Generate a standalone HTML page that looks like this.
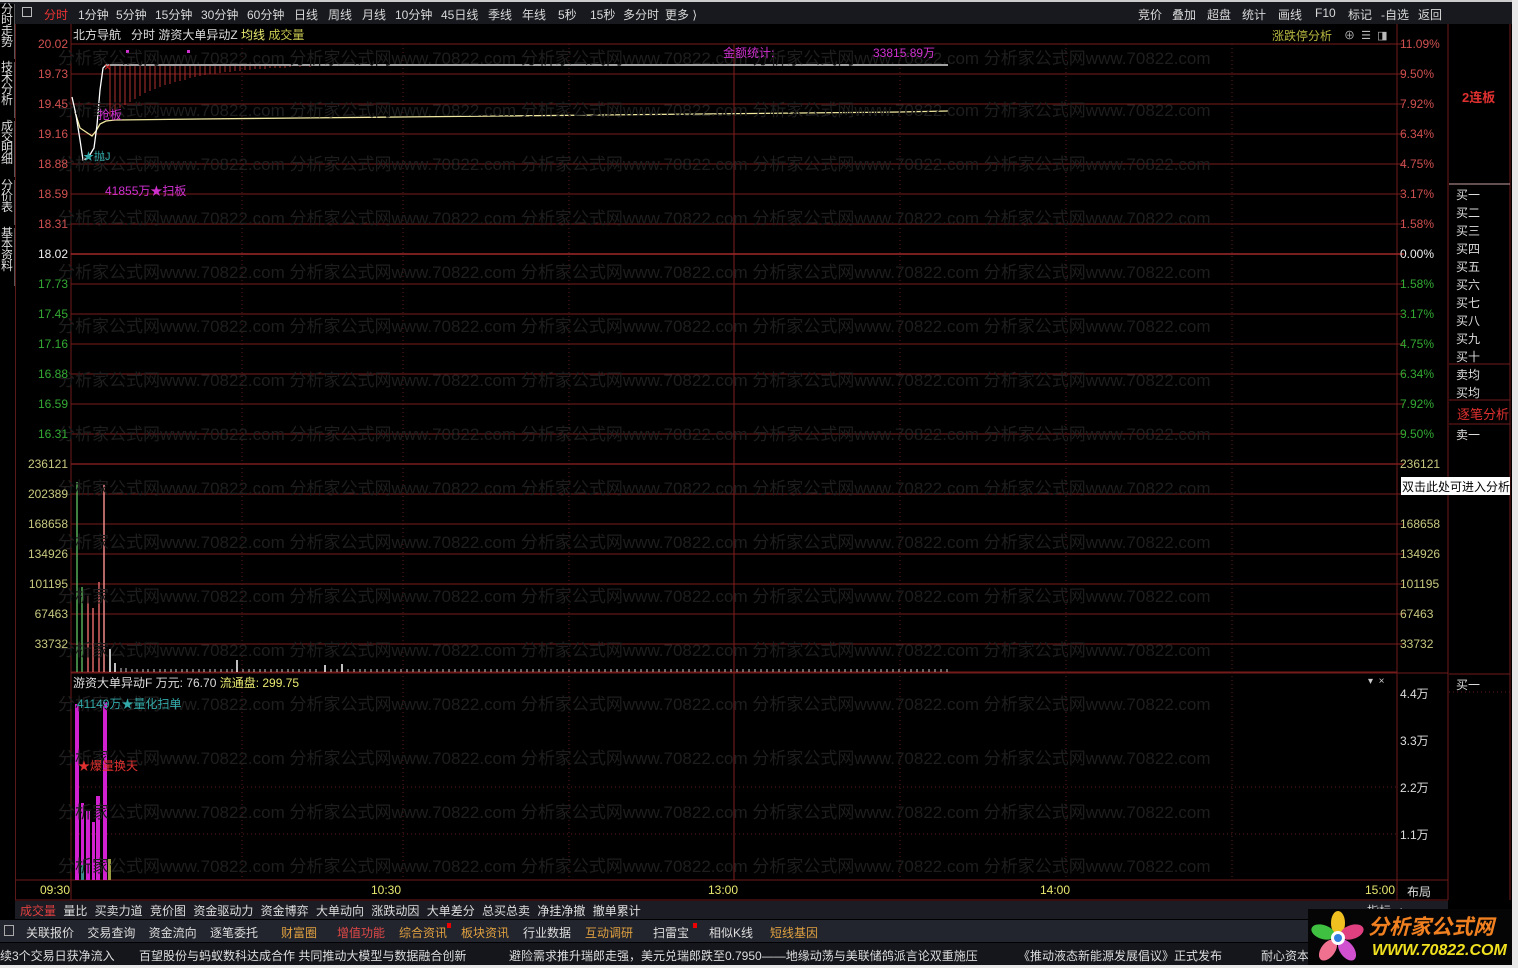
<!DOCTYPE html>
<html><head><meta charset="utf-8">
<style>
*{margin:0;padding:0;box-sizing:border-box}
body{width:1518px;height:968px;background:#000;overflow:hidden;position:relative;font-family:"Liberation Sans","Noto Sans CJK SC",sans-serif;font-size:12px;color:#ddd}
.a{position:absolute;white-space:nowrap}
.top{left:0;top:0;width:1512px;height:24px;background:#17191e;border-top:2px solid #ccc}
.top span{position:absolute;top:4px;color:#d8d8d8;font-size:12px}
.lax{width:54px;text-align:right;left:14px;font-size:12px}
.rax{left:1400px;font-size:12px}
.side{left:0;width:15px;background:#000;border-right:1px solid #555;color:#ddd;font-size:12px;line-height:11px;text-align:center}
.wm{color:#1e1e1e;font-size:17px;left:58px}
.bp{left:1456px;font-size:12px;color:#ddd}
</style></head><body>
<div class="a top">
<span style="left:22px;top:5px;width:10px;height:10px;border:1px solid #bbb"></span>
<span style="left:44px;color:#e33">分时</span><span style="left:78px">1分钟</span><span style="left:116px">5分钟</span><span style="left:155px">15分钟</span><span style="left:201px">30分钟</span><span style="left:247px">60分钟</span><span style="left:294px">日线</span><span style="left:328px">周线</span><span style="left:362px">月线</span><span style="left:395px">10分钟</span><span style="left:441px">45日线</span><span style="left:488px">季线</span><span style="left:522px">年线</span><span style="left:558px">5秒</span><span style="left:590px">15秒</span><span style="left:623px">多分时</span><span style="left:665px">更多 ⟩</span>
<span style="left:1138px">竞价</span><span style="left:1172px">叠加</span><span style="left:1207px">超盘</span><span style="left:1242px">统计</span><span style="left:1278px">画线</span><span style="left:1315px">F10</span><span style="left:1348px">标记</span><span style="left:1381px">-自选</span><span style="left:1418px">返回</span>
</div>
<div class="a" style="left:1512px;top:0;width:6px;height:968px;background:#e8e8e8"></div>
<div class="a" style="left:0;top:965px;width:1518px;height:3px;background:#e8e8e8"></div>

<div class="a side" style="top:4px;height:55px">分<br>时<br>走<br>势</div>
<div class="a side" style="top:62px;height:56px">技<br>术<br>分<br>析</div>
<div class="a side" style="top:121px;height:56px">成<br>交<br>明<br>细</div>
<div class="a side" style="top:180px;height:45px">分<br>价<br>表</div>
<div class="a side" style="top:228px;height:58px">基<br>本<br>资<br>料</div>
<div class="a" style="left:15px;top:24px;width:1px;height:876px;background:#5a1a1a"></div>

<svg class="a" style="left:0;top:0" width="1518" height="968">
<g stroke="#6e1a1a" stroke-width="1">
<line x1="71" y1="24" x2="71" y2="900"/>
<line x1="1397" y1="24" x2="1397" y2="900"/>
<line x1="1448" y1="24" x2="1448" y2="900"/>
<line x1="1510" y1="24" x2="1510" y2="900"/>
<line x1="15" y1="880" x2="1448" y2="880"/>
<line x1="15" y1="900" x2="1448" y2="900"/>
<line x1="71" y1="673" x2="1448" y2="673"/>
<line x1="734" y1="44" x2="734" y2="880" stroke="#802020"/>
</g>
<g stroke="#7a1c1c">
<line x1="71" y1="44" x2="1404" y2="44"/><line x1="71" y1="74" x2="1404" y2="74"/><line x1="71" y1="104" x2="1404" y2="104"/><line x1="71" y1="134" x2="1404" y2="134"/><line x1="71" y1="164" x2="1404" y2="164"/><line x1="71" y1="194" x2="1404" y2="194"/><line x1="71" y1="224" x2="1404" y2="224"/><line x1="71" y1="254" x2="1404" y2="254" stroke="#a02828" stroke-width="1.5"/><line x1="71" y1="284" x2="1404" y2="284"/><line x1="71" y1="314" x2="1404" y2="314"/><line x1="71" y1="344" x2="1404" y2="344"/><line x1="71" y1="374" x2="1404" y2="374"/><line x1="71" y1="404" x2="1404" y2="404"/><line x1="71" y1="434" x2="1404" y2="434"/>
<line x1="71" y1="464" x2="1404" y2="464" stroke-width="1.5"/><line x1="71" y1="494" x2="1404" y2="494"/><line x1="71" y1="524" x2="1404" y2="524"/><line x1="71" y1="554" x2="1404" y2="554"/><line x1="71" y1="584" x2="1404" y2="584"/><line x1="71" y1="614" x2="1404" y2="614"/><line x1="71" y1="644" x2="1404" y2="644"/><line x1="71" y1="672" x2="1397" y2="672"/>
</g>
<g stroke="#5a1a1a" stroke-dasharray="1,3">
<line x1="242" y1="44" x2="242" y2="880"/><line x1="1066" y1="44" x2="1066" y2="880"/><line x1="403" y1="44" x2="403" y2="880"/><line x1="569" y1="44" x2="569" y2="880"/><line x1="900" y1="44" x2="900" y2="880"/><line x1="1232" y1="44" x2="1232" y2="880"/>
<line x1="71" y1="787" x2="1397" y2="787"/><line x1="71" y1="834" x2="1397" y2="834"/>
<line x1="1449" y1="692" x2="1510" y2="692"/>
</g>
<line x1="1449" y1="184" x2="1510" y2="184" stroke="#c8a0a0"/>
<line x1="1449" y1="364" x2="1510" y2="364" stroke="#6e1a1a"/>
<line x1="1449" y1="400" x2="1510" y2="400" stroke="#6e1a1a"/>
<line x1="1449" y1="424" x2="1510" y2="424" stroke="#6e1a1a"/>
<line x1="1449" y1="674" x2="1510" y2="674" stroke="#6e1a1a"/>
<!-- hatches -->
<g stroke="#b03030" stroke-width="1">
<line x1="110" y1="66" x2="110" y2="116"/><line x1="115" y1="66" x2="115" y2="112"/><line x1="120" y1="66" x2="120" y2="108"/><line x1="125" y1="66" x2="125" y2="105"/><line x1="130" y1="66" x2="130" y2="102"/><line x1="135" y1="66" x2="135" y2="99"/><line x1="140" y1="66" x2="140" y2="96"/><line x1="145" y1="66" x2="145" y2="93"/><line x1="150" y1="66" x2="150" y2="91"/><line x1="155" y1="66" x2="155" y2="89"/><line x1="160" y1="66" x2="160" y2="87"/><line x1="165" y1="66" x2="165" y2="85"/><line x1="170" y1="66" x2="170" y2="84"/><line x1="175" y1="66" x2="175" y2="82"/><line x1="180" y1="66" x2="180" y2="81"/><line x1="185" y1="66" x2="185" y2="80"/><line x1="190" y1="66" x2="190" y2="78"/><line x1="195" y1="66" x2="195" y2="77"/><line x1="200" y1="66" x2="200" y2="76"/><line x1="205" y1="66" x2="205" y2="75"/><line x1="210" y1="66" x2="210" y2="74"/><line x1="215" y1="66" x2="215" y2="74"/><line x1="220" y1="66" x2="220" y2="73"/><line x1="225" y1="66" x2="225" y2="72"/><line x1="230" y1="66" x2="230" y2="72"/><line x1="235" y1="66" x2="235" y2="71"/><line x1="240" y1="66" x2="240" y2="71"/><line x1="245" y1="66" x2="245" y2="70"/><line x1="250" y1="66" x2="250" y2="70"/><line x1="255" y1="66" x2="255" y2="69"/><line x1="260" y1="66" x2="260" y2="69"/><line x1="265" y1="66" x2="265" y2="69"/><line x1="270" y1="66" x2="270" y2="68"/><line x1="275" y1="66" x2="275" y2="68"/><line x1="280" y1="66" x2="280" y2="68"/><line x1="285" y1="66" x2="285" y2="68"/><line x1="290" y1="66" x2="290" y2="67"/><line x1="300" y1="66" x2="300" y2="67"/><line x1="310" y1="66" x2="310" y2="67"/>
</g>
<polyline fill="none" stroke="#f0e8a0" stroke-width="1.3" points="75,112 80,128 86,132 92,136 96,131 100,124 106,121 115,120 200,119 300,118 400,117 500,116 600,115 700,114 800,113 900,112 948,111"/>
<polyline fill="none" stroke="#fff" stroke-width="1.3" points="72,97 76,115 80,140 83,160 88,158 94,148 97,125 100,90 103,68 106,65 948,65"/>
<text x="104" y="71" fill="#e02020" font-size="12">×</text>
<rect x="126" y="50" width="3" height="3" fill="#d030d0"/><rect x="187" y="50" width="3" height="3" fill="#d030d0"/>
<!-- volume bars -->
<g stroke-width="1.5">
<line x1="77" y1="482" x2="77" y2="672" stroke="#5a5"/><line x1="82" y1="587" x2="82" y2="672" stroke="#5a5"/>
<line x1="88" y1="596" x2="88" y2="672" stroke="#d66"/><line x1="93" y1="608" x2="93" y2="672" stroke="#d66"/><line x1="99" y1="582" x2="99" y2="672" stroke="#d66"/><line x1="104" y1="485" x2="104" y2="672" stroke="#e88"/>
<line x1="110" y1="649" x2="110" y2="672" stroke="#fff"/><line x1="115" y1="663" x2="115" y2="672" stroke="#fff"/><line x1="237" y1="660" x2="237" y2="672" stroke="#fff"/><line x1="325" y1="665" x2="325" y2="672" stroke="#fff"/><line x1="342" y1="664" x2="342" y2="672" stroke="#fff"/>
</g>
<path d="M121 668v4M126 668v4M132 669v3M137 669v3M143 669v3M148 669v3M154 669v3M160 669v3M165 669v3M171 669v3M176 669v3M182 669v3M187 669v3M193 669v3M199 669v3M204 669v3M210 669v3M215 669v3M221 669v3M227 669v3M232 669v3M243 669v3M249 669v3M254 669v3M260 669v3M265 669v3M271 669v3M277 669v3M282 669v3M288 669v3M293 669v3M299 669v3M305 669v3M310 669v3M316 669v3M331 669v3M337 669v3M348 669v3M354 669v3M360 669v3M365 669v3M371 669v3M377 669v3M383 669v3M389 669v3M395 669v3M401 669v3M407 669v3M413 669v3M419 669v3M425 669v3M431 669v3M437 669v3M443 669v3M449 669v3M455 669v3M461 669v3M467 669v3M473 669v3M479 669v3M485 669v3M491 669v3M497 669v3M503 669v3M509 669v3M515 669v3M521 669v3M527 669v3M533 669v3M539 669v3M545 669v3M551 669v3M557 669v3M563 669v3M569 669v3M575 669v3M581 669v3M587 669v3M593 669v3M599 669v3M605 669v3M611 669v3M617 669v3M623 669v3M629 669v3M635 669v3M641 669v3M647 669v3M653 669v3M659 669v3M665 669v3M671 669v3M677 669v3M683 669v3M689 669v3M695 669v3M701 669v3M707 669v3M713 669v3M719 669v3M725 669v3M731 669v3M737 669v3M743 669v3M749 669v3M755 669v3M761 669v3M767 669v3M773 669v3M779 669v3M785 669v3M791 669v3M797 669v3M803 669v3M809 669v3M815 669v3M821 669v3M827 669v3M833 669v3M839 669v3M845 669v3M851 669v3M857 669v3M863 669v3M869 669v3M875 669v3M881 669v3M887 669v3M893 669v3M899 669v3M905 669v3M911 669v3M917 669v3M923 669v3M929 669v3M935 669v3M941 669v3M947 669v3" stroke="#ccc" stroke-width="1"/>
<!-- lower panel bars -->
<rect x="75" y="704" width="4" height="176" fill="#d020d0"/>
<rect x="81" y="803" width="3" height="77" fill="#d020d0"/>
<rect x="86" y="811" width="4" height="69" fill="#d020d0"/>
<rect x="92" y="822" width="3" height="58" fill="#d020d0"/>
<rect x="96" y="796" width="4" height="84" fill="#d020d0"/>
<rect x="103" y="702" width="4" height="178" fill="#d020d0"/>
<rect x="81" y="865" width="3" height="15" fill="#3a8a8a"/>
<rect x="108" y="859" width="3" height="21" fill="#9a9a40"/>
</svg>

<!-- watermark -->
<div class="a wm" style="top:44px">分析家公式网www.70822.com 分析家公式网www.70822.com 分析家公式网www.70822.com 分析家公式网www.70822.com 分析家公式网www.70822.com</div>
<div class="a wm" style="top:96px">分析家公式网www.70822.com 分析家公式网www.70822.com 分析家公式网www.70822.com 分析家公式网www.70822.com 分析家公式网www.70822.com</div>
<div class="a wm" style="top:150px">分析家公式网www.70822.com 分析家公式网www.70822.com 分析家公式网www.70822.com 分析家公式网www.70822.com 分析家公式网www.70822.com</div>
<div class="a wm" style="top:204px">分析家公式网www.70822.com 分析家公式网www.70822.com 分析家公式网www.70822.com 分析家公式网www.70822.com 分析家公式网www.70822.com</div>
<div class="a wm" style="top:258px">分析家公式网www.70822.com 分析家公式网www.70822.com 分析家公式网www.70822.com 分析家公式网www.70822.com 分析家公式网www.70822.com</div>
<div class="a wm" style="top:312px">分析家公式网www.70822.com 分析家公式网www.70822.com 分析家公式网www.70822.com 分析家公式网www.70822.com 分析家公式网www.70822.com</div>
<div class="a wm" style="top:366px">分析家公式网www.70822.com 分析家公式网www.70822.com 分析家公式网www.70822.com 分析家公式网www.70822.com 分析家公式网www.70822.com</div>
<div class="a wm" style="top:420px">分析家公式网www.70822.com 分析家公式网www.70822.com 分析家公式网www.70822.com 分析家公式网www.70822.com 分析家公式网www.70822.com</div>
<div class="a wm" style="top:474px">分析家公式网www.70822.com 分析家公式网www.70822.com 分析家公式网www.70822.com 分析家公式网www.70822.com 分析家公式网www.70822.com</div>
<div class="a wm" style="top:528px">分析家公式网www.70822.com 分析家公式网www.70822.com 分析家公式网www.70822.com 分析家公式网www.70822.com 分析家公式网www.70822.com</div>
<div class="a wm" style="top:582px">分析家公式网www.70822.com 分析家公式网www.70822.com 分析家公式网www.70822.com 分析家公式网www.70822.com 分析家公式网www.70822.com</div>
<div class="a wm" style="top:636px">分析家公式网www.70822.com 分析家公式网www.70822.com 分析家公式网www.70822.com 分析家公式网www.70822.com 分析家公式网www.70822.com</div>
<div class="a wm" style="top:690px">分析家公式网www.70822.com 分析家公式网www.70822.com 分析家公式网www.70822.com 分析家公式网www.70822.com 分析家公式网www.70822.com</div>
<div class="a wm" style="top:744px">分析家公式网www.70822.com 分析家公式网www.70822.com 分析家公式网www.70822.com 分析家公式网www.70822.com 分析家公式网www.70822.com</div>
<div class="a wm" style="top:798px">分析家公式网www.70822.com 分析家公式网www.70822.com 分析家公式网www.70822.com 分析家公式网www.70822.com 分析家公式网www.70822.com</div>
<div class="a wm" style="top:852px">分析家公式网www.70822.com 分析家公式网www.70822.com 分析家公式网www.70822.com 分析家公式网www.70822.com 分析家公式网www.70822.com</div>

<!-- chart header -->
<div class="a" style="left:73px;top:26px;color:#ddd">北方导航 &nbsp;&nbsp;分时 游资大单异动Z <span style="color:#e8e870">均线</span> <span style="color:#c8c850">成交量</span></div>
<div class="a" style="left:1272px;top:27px;color:#b8b840">涨跌停分析</div>
<div class="a" style="left:1344px;top:27px;color:#bbb;font-size:11px">⊕ &nbsp;☰ &nbsp;◨</div>
<div class="a" style="left:723px;top:44px;color:#d030d0">金额统计:</div>
<div class="a" style="left:873px;top:44px;color:#d030d0">33815.89万</div>
<div class="a" style="left:98px;top:106px;color:#d030d0">抢板</div>
<div class="a" style="left:83px;top:148px;color:#3aa;font-size:11px">★抛J</div>
<div class="a" style="left:105px;top:182px;color:#d030d0">41855万★扫板</div>

<!-- left axis -->
<div class="a lax" style="top:37px;color:#d05050">20.02</div>
<div class="a lax" style="top:67px;color:#d05050">19.73</div>
<div class="a lax" style="top:97px;color:#d05050">19.45</div>
<div class="a lax" style="top:127px;color:#d05050">19.16</div>
<div class="a lax" style="top:157px;color:#d05050">18.88</div>
<div class="a lax" style="top:187px;color:#d05050">18.59</div>
<div class="a lax" style="top:217px;color:#d05050">18.31</div>
<div class="a lax" style="top:247px;color:#eee">18.02</div>
<div class="a lax" style="top:277px;color:#3a3">17.73</div>
<div class="a lax" style="top:307px;color:#3a3">17.45</div>
<div class="a lax" style="top:337px;color:#3a3">17.16</div>
<div class="a lax" style="top:367px;color:#3a3">16.88</div>
<div class="a lax" style="top:397px;color:#3a3">16.59</div>
<div class="a lax" style="top:427px;color:#3a3">16.31</div>
<div class="a lax" style="top:457px;color:#c8c880">236121</div>
<div class="a lax" style="top:487px;color:#c8c880">202389</div>
<div class="a lax" style="top:517px;color:#c8c880">168658</div>
<div class="a lax" style="top:547px;color:#c8c880">134926</div>
<div class="a lax" style="top:577px;color:#c8c880">101195</div>
<div class="a lax" style="top:607px;color:#c8c880">67463</div>
<div class="a lax" style="top:637px;color:#c8c880">33732</div>

<!-- right axis -->
<div class="a rax" style="top:37px;color:#d05050">11.09%</div>
<div class="a rax" style="top:67px;color:#d05050">9.50%</div>
<div class="a rax" style="top:97px;color:#d05050">7.92%</div>
<div class="a rax" style="top:127px;color:#d05050">6.34%</div>
<div class="a rax" style="top:157px;color:#d05050">4.75%</div>
<div class="a rax" style="top:187px;color:#d05050">3.17%</div>
<div class="a rax" style="top:217px;color:#d05050">1.58%</div>
<div class="a rax" style="top:247px;color:#eee">0.00%</div>
<div class="a rax" style="top:277px;color:#3a3">1.58%</div>
<div class="a rax" style="top:307px;color:#3a3">3.17%</div>
<div class="a rax" style="top:337px;color:#3a3">4.75%</div>
<div class="a rax" style="top:367px;color:#3a3">6.34%</div>
<div class="a rax" style="top:397px;color:#3a3">7.92%</div>
<div class="a rax" style="top:427px;color:#3a3">9.50%</div>
<div class="a rax" style="top:457px;color:#c8c880">236121</div>
<div class="a rax" style="top:517px;color:#c8c880">168658</div>
<div class="a rax" style="top:547px;color:#c8c880">134926</div>
<div class="a rax" style="top:577px;color:#c8c880">101195</div>
<div class="a rax" style="top:607px;color:#c8c880">67463</div>
<div class="a rax" style="top:637px;color:#c8c880">33732</div>
<div class="a rax" style="top:685px;color:#ddd">4.4万</div>
<div class="a rax" style="top:732px;color:#ddd">3.3万</div>
<div class="a rax" style="top:779px;color:#ddd">2.2万</div>
<div class="a rax" style="top:826px;color:#ddd">1.1万</div>
<div class="a" style="left:1401px;top:477px;width:109px;height:18px;background:#fff;color:#000;font-size:12px;padding:1px 0 0 1px">双击此处可进入分析</div>

<!-- right panel -->
<div class="a" style="left:1462px;top:87px;color:#e03030;font-weight:bold;font-size:13px">2连板</div>
<div class="a bp" style="top:186px;line-height:18px">买一<br>买二<br>买三<br>买四<br>买五<br>买六<br>买七<br>买八<br>买九<br>买十</div>
<div class="a bp" style="top:366px;line-height:18px">卖均<br>买均</div>
<div class="a" style="left:1457px;top:404px;color:#e03030;font-size:13px">逐笔分析</div>
<div class="a bp" style="top:426px">卖一</div>
<div class="a bp" style="top:676px">买一</div>

<!-- lower panel header -->
<div class="a" style="left:73px;top:674px;color:#ddd">游资大单异动F 万元: 76.70 <span style="color:#e8e870">流通盘: 299.75</span></div>
<div class="a" style="left:1368px;top:676px;color:#ccc;font-size:10px">▾ &nbsp;×</div>
<div class="a" style="left:77px;top:695px;color:#3aa">41149万★量化扫单</div>
<div class="a" style="left:78px;top:757px;color:#e03030">★爆量换天</div>

<!-- time axis -->
<div class="a" style="left:40px;top:883px;color:#e8e870">09:30</div>
<div class="a" style="left:371px;top:883px;color:#e8e870">10:30</div>
<div class="a" style="left:708px;top:883px;color:#e8e870">13:00</div>
<div class="a" style="left:1040px;top:883px;color:#e8e870">14:00</div>
<div class="a" style="left:1365px;top:883px;color:#e8e870">15:00</div>
<div class="a" style="left:1407px;top:883px;color:#ddd">布局</div>

<!-- tabs row -->
<div class="a" style="left:15px;top:901px;width:1433px;height:18px;background:#1c1d24"></div>
<div class="a" style="left:20px;top:902px;color:#ddd;word-spacing:4px"><span style="color:#e04040">成交量</span> 量比 买卖力道 竞价图 资金驱动力 资金博弈 大单动向 涨跌动因 大单差分 总买总卖 净挂净撤 撤单累计</div>
<div class="a" style="left:1367px;top:902px;color:#ccc">指标 &nbsp;+ &nbsp;&nbsp;-</div>
<!-- toolbar -->
<div class="a" style="left:0;top:920px;width:1512px;height:22px;background:#22252d"></div>
<div class="a" style="left:4px;top:925px;width:10px;height:11px;border:1px solid #aaa"></div>
<div class="a" style="left:26px;top:924px;color:#ddd;word-spacing:10px">关联报价 交易查询 资金流向 逐笔委托</div>
<div class="a" style="left:281px;top:924px;color:#e0a040">财富圈</div>
<div class="a" style="left:337px;top:924px;color:#e04848">增值功能</div>
<div class="a" style="left:399px;top:924px;color:#e0a040">综合资讯</div>
<div class="a" style="left:447px;top:923px;width:4px;height:5px;background:#e00"></div>
<div class="a" style="left:461px;top:924px;color:#e0a040">板块资讯</div>
<div class="a" style="left:523px;top:924px;color:#ddd">行业数据</div>
<div class="a" style="left:585px;top:924px;color:#e0a040">互动调研</div>
<div class="a" style="left:653px;top:924px;color:#ddd">扫雷宝</div>
<div class="a" style="left:693px;top:923px;width:4px;height:5px;background:#e00"></div>
<div class="a" style="left:709px;top:924px;color:#ddd">相似K线</div>
<div class="a" style="left:770px;top:924px;color:#e0a040">短线基因</div>
<!-- ticker -->
<div class="a" style="left:0;top:943px;width:1512px;height:22px;background:#14161b"></div>
<div class="a" style="left:0;top:947px;color:#ddd">续3个交易日获净流入</div>
<div class="a" style="left:139px;top:947px;color:#ddd">百望股份与蚂蚁数科达成合作 共同推动大模型与数据融合创新</div>
<div class="a" style="left:509px;top:947px;color:#ddd">避险需求推升瑞郎走强，美元兑瑞郎跌至0.7950——地缘动荡与美联储鸽派言论双重施压</div>
<div class="a" style="left:1018px;top:947px;color:#ddd">《推动液态新能源发展倡议》正式发布</div>
<div class="a" style="left:1261px;top:947px;color:#ddd">耐心资本</div>
<!-- logo -->
<div class="a" style="left:1308px;top:909px;width:204px;height:56px;background:#050505"></div>
<svg class="a" style="left:1310px;top:910px" width="56" height="54">
<ellipse cx="28" cy="13" rx="7" ry="12" fill="#f0c020"/>
<ellipse cx="42" cy="22" rx="7" ry="12" fill="#e04080" transform="rotate(72 42 22)"/>
<ellipse cx="37" cy="40" rx="7" ry="12" fill="#d050d0" transform="rotate(144 37 40)"/>
<ellipse cx="18" cy="40" rx="7" ry="12" fill="#f07090" transform="rotate(216 18 40)"/>
<ellipse cx="13" cy="22" rx="7" ry="12" fill="#40c040" transform="rotate(288 13 22)"/>
<circle cx="28" cy="28" r="7" fill="#fff"/><circle cx="28" cy="28" r="4" fill="#3080e0"/>
</svg>
<div class="a" style="left:1368px;top:911px;color:#f08020;font-size:21px;font-weight:bold;font-style:italic">分析家公式网</div>
<div class="a" style="left:1372px;top:942px;color:#f0e020;font-size:16px;font-weight:bold;font-style:italic">WWW.70822.COM</div>
</body></html>
